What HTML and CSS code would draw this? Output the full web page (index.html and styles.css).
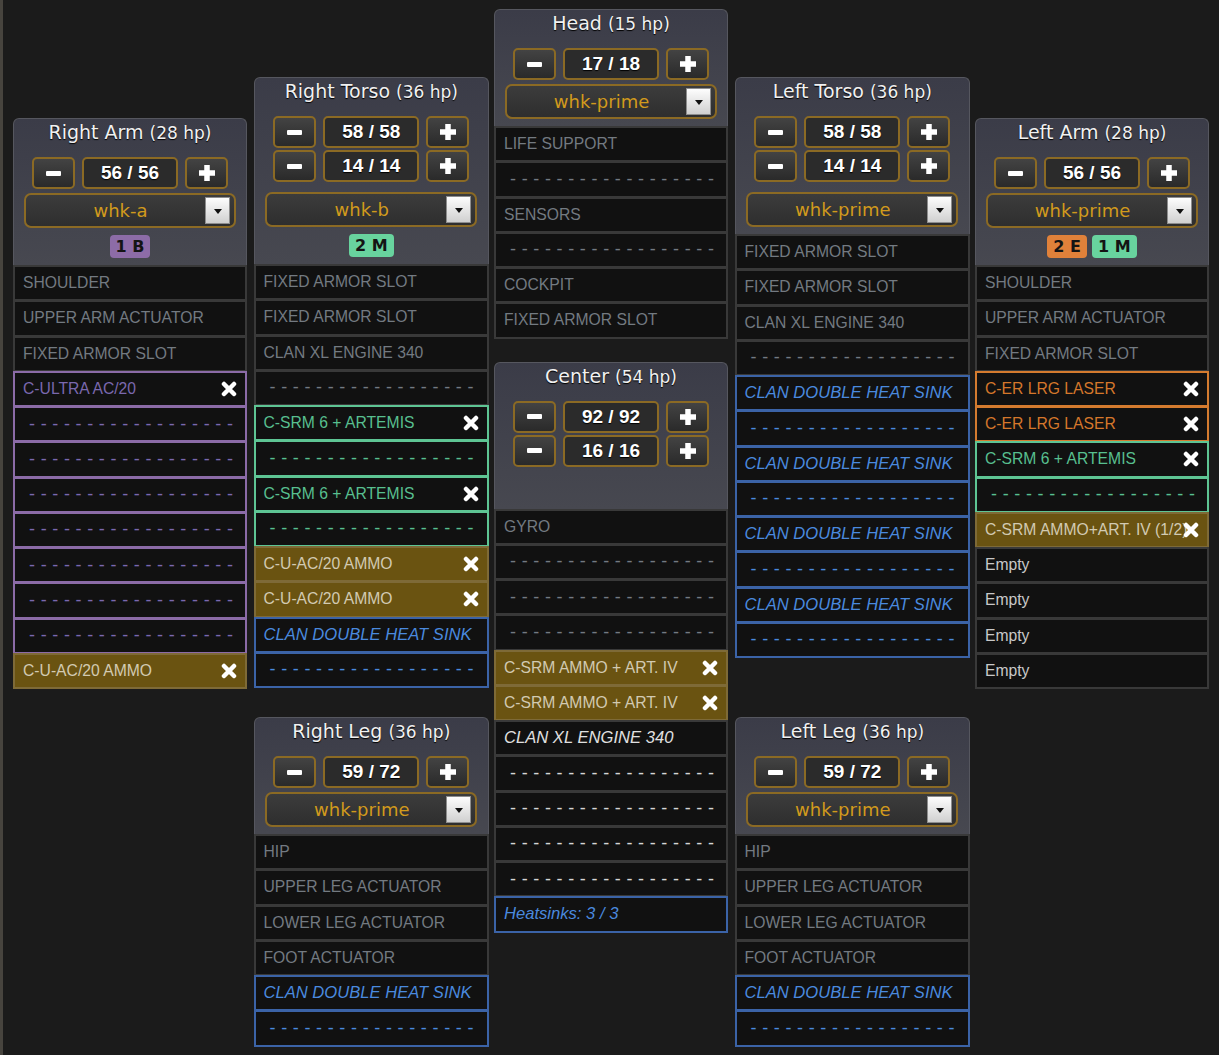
FILE: index.html
```html
<!DOCTYPE html>
<html><head>
  <meta charset="utf-8">
  <title>Mech loadout</title>
  <link rel="stylesheet" href="styles.css">
</head>
<body>

<div class="mech">

<div class="col arm">
<div class="part">
  <div class="part-head">
    <div class="title">Right Arm <small>(28 hp)</small></div>
    <div class="armor">
      <div class="row"><span class="btn"><svg width="15" height="5"><rect width="15" height="5" rx="1" fill="#fff"/></svg></span><span class="val">56 / 56</span><span class="btn"><svg width="16" height="16"><path d="M5.25 0h5.5v5.25H16v5.5h-5.25V16h-5.5v-5.25H0v-5.5h5.25z" fill="#fff"/></svg></span></div>
    </div>
    <div class="omni"><span>whk-a</span><i class="arrow"></i></div>
    <div class="hards"><span class="hp b">1 B</span></div>
  </div>
  <div class="slots">
    <div class="slot">Shoulder</div>
    <div class="slot">Upper Arm Actuator</div>
    <div class="slot">Fixed Armor Slot</div>
    <div class="slot b"><span class="name">C-Ultra AC/20</span><svg class="x" width="16" height="16"><path d="M3 3l10 10M13 3L3 13" stroke="#fff" stroke-width="4.5" stroke-linecap="round"/></svg></div>
    <div class="slot b dash">------------------</div>
    <div class="slot b dash">------------------</div>
    <div class="slot b dash">------------------</div>
    <div class="slot b dash">------------------</div>
    <div class="slot b dash">------------------</div>
    <div class="slot b dash">------------------</div>
    <div class="slot b dash">------------------</div>
    <div class="slot ammo"><span class="name">C-U-AC/20 Ammo</span><svg class="x" width="16" height="16"><path d="M3 3l10 10M13 3L3 13" stroke="#fff" stroke-width="4.5" stroke-linecap="round"/></svg></div>
  </div>
</div>
</div>

<div class="col side">
<div class="part">
  <div class="part-head double">
    <div class="title">Right Torso <small>(36 hp)</small></div>
    <div class="armor">
      <div class="row"><span class="btn"><svg width="15" height="5"><rect width="15" height="5" rx="1" fill="#fff"/></svg></span><span class="val">58 / 58</span><span class="btn"><svg width="16" height="16"><path d="M5.25 0h5.5v5.25H16v5.5h-5.25V16h-5.5v-5.25H0v-5.5h5.25z" fill="#fff"/></svg></span></div>
      <div class="row"><span class="btn"><svg width="15" height="5"><rect width="15" height="5" rx="1" fill="#fff"/></svg></span><span class="val">14 / 14</span><span class="btn"><svg width="16" height="16"><path d="M5.25 0h5.5v5.25H16v5.5h-5.25V16h-5.5v-5.25H0v-5.5h5.25z" fill="#fff"/></svg></span></div>
    </div>
    <div class="omni"><span>whk-b</span><i class="arrow"></i></div>
    <div class="hards"><span class="hp m">2 M</span></div>
  </div>
  <div class="slots">
    <div class="slot">Fixed Armor Slot</div>
    <div class="slot">Fixed Armor Slot</div>
    <div class="slot">Clan XL Engine 340</div>
    <div class="slot dash">------------------</div>
    <div class="slot m"><span class="name">C-SRM 6 + Artemis</span><svg class="x" width="16" height="16"><path d="M3 3l10 10M13 3L3 13" stroke="#fff" stroke-width="4.5" stroke-linecap="round"/></svg></div>
    <div class="slot m dash">------------------</div>
    <div class="slot m"><span class="name">C-SRM 6 + Artemis</span><svg class="x" width="16" height="16"><path d="M3 3l10 10M13 3L3 13" stroke="#fff" stroke-width="4.5" stroke-linecap="round"/></svg></div>
    <div class="slot m dash">------------------</div>
    <div class="slot ammo"><span class="name">C-U-AC/20 Ammo</span><svg class="x" width="16" height="16"><path d="M3 3l10 10M13 3L3 13" stroke="#fff" stroke-width="4.5" stroke-linecap="round"/></svg></div>
    <div class="slot ammo"><span class="name">C-U-AC/20 Ammo</span><svg class="x" width="16" height="16"><path d="M3 3l10 10M13 3L3 13" stroke="#fff" stroke-width="4.5" stroke-linecap="round"/></svg></div>
    <div class="slot hs">Clan Double Heat Sink</div>
    <div class="slot hs dash">------------------</div>
  </div>
</div>
<div class="part">
  <div class="part-head">
    <div class="title">Right Leg <small>(36 hp)</small></div>
    <div class="armor">
      <div class="row"><span class="btn"><svg width="15" height="5"><rect width="15" height="5" rx="1" fill="#fff"/></svg></span><span class="val">59 / 72</span><span class="btn"><svg width="16" height="16"><path d="M5.25 0h5.5v5.25H16v5.5h-5.25V16h-5.5v-5.25H0v-5.5h5.25z" fill="#fff"/></svg></span></div>
    </div>
    <div class="omni"><span>whk-prime</span><i class="arrow"></i></div>
  </div>
  <div class="slots">
    <div class="slot">Hip</div>
    <div class="slot">Upper Leg Actuator</div>
    <div class="slot">Lower Leg Actuator</div>
    <div class="slot">Foot Actuator</div>
    <div class="slot hs">Clan Double Heat Sink</div>
    <div class="slot hs dash">------------------</div>
  </div>
</div>
</div>

<div class="col mid">
<div class="part">
  <div class="part-head">
    <div class="title">Head <small>(15 hp)</small></div>
    <div class="armor">
      <div class="row"><span class="btn"><svg width="15" height="5"><rect width="15" height="5" rx="1" fill="#fff"/></svg></span><span class="val">17 / 18</span><span class="btn"><svg width="16" height="16"><path d="M5.25 0h5.5v5.25H16v5.5h-5.25V16h-5.5v-5.25H0v-5.5h5.25z" fill="#fff"/></svg></span></div>
    </div>
    <div class="omni"><span>whk-prime</span><i class="arrow"></i></div>
  </div>
  <div class="slots">
    <div class="slot">Life Support</div>
    <div class="slot dash">------------------</div>
    <div class="slot">Sensors</div>
    <div class="slot dash">------------------</div>
    <div class="slot">Cockpit</div>
    <div class="slot">Fixed Armor Slot</div>
  </div>
</div>
<div class="part">
  <div class="part-head">
    <div class="title">Center <small>(54 hp)</small></div>
    <div class="armor">
      <div class="row"><span class="btn"><svg width="15" height="5"><rect width="15" height="5" rx="1" fill="#fff"/></svg></span><span class="val">92 / 92</span><span class="btn"><svg width="16" height="16"><path d="M5.25 0h5.5v5.25H16v5.5h-5.25V16h-5.5v-5.25H0v-5.5h5.25z" fill="#fff"/></svg></span></div>
      <div class="row"><span class="btn"><svg width="15" height="5"><rect width="15" height="5" rx="1" fill="#fff"/></svg></span><span class="val">16 / 16</span><span class="btn"><svg width="16" height="16"><path d="M5.25 0h5.5v5.25H16v5.5h-5.25V16h-5.5v-5.25H0v-5.5h5.25z" fill="#fff"/></svg></span></div>
    </div>
    <div class="spacer"></div>
  </div>
  <div class="slots">
    <div class="slot">Gyro</div>
    <div class="slot dash">------------------</div>
    <div class="slot dash">------------------</div>
    <div class="slot dash">------------------</div>
    <div class="slot ammo"><span class="name">C-SRM Ammo + Art. IV</span><svg class="x" width="16" height="16"><path d="M3 3l10 10M13 3L3 13" stroke="#fff" stroke-width="4.5" stroke-linecap="round"/></svg></div>
    <div class="slot ammo"><span class="name">C-SRM Ammo + Art. IV</span><svg class="x" width="16" height="16"><path d="M3 3l10 10M13 3L3 13" stroke="#fff" stroke-width="4.5" stroke-linecap="round"/></svg></div>
    <div class="slot eng">Clan XL Engine 340</div>
    <div class="slot light dash">------------------</div>
    <div class="slot light dash">------------------</div>
    <div class="slot light dash">------------------</div>
    <div class="slot light dash">------------------</div>
    <div class="slot hs note">Heatsinks: 3 / 3</div>
  </div>
</div>
</div>

<div class="col side">
<div class="part">
  <div class="part-head double">
    <div class="title">Left Torso <small>(36 hp)</small></div>
    <div class="armor">
      <div class="row"><span class="btn"><svg width="15" height="5"><rect width="15" height="5" rx="1" fill="#fff"/></svg></span><span class="val">58 / 58</span><span class="btn"><svg width="16" height="16"><path d="M5.25 0h5.5v5.25H16v5.5h-5.25V16h-5.5v-5.25H0v-5.5h5.25z" fill="#fff"/></svg></span></div>
      <div class="row"><span class="btn"><svg width="15" height="5"><rect width="15" height="5" rx="1" fill="#fff"/></svg></span><span class="val">14 / 14</span><span class="btn"><svg width="16" height="16"><path d="M5.25 0h5.5v5.25H16v5.5h-5.25V16h-5.5v-5.25H0v-5.5h5.25z" fill="#fff"/></svg></span></div>
    </div>
    <div class="omni"><span>whk-prime</span><i class="arrow"></i></div>
  </div>
  <div class="slots">
    <div class="slot">Fixed Armor Slot</div>
    <div class="slot">Fixed Armor Slot</div>
    <div class="slot">Clan XL Engine 340</div>
    <div class="slot dash">------------------</div>
    <div class="slot hs">Clan Double Heat Sink</div>
    <div class="slot hs dash">------------------</div>
    <div class="slot hs">Clan Double Heat Sink</div>
    <div class="slot hs dash">------------------</div>
    <div class="slot hs">Clan Double Heat Sink</div>
    <div class="slot hs dash">------------------</div>
    <div class="slot hs">Clan Double Heat Sink</div>
    <div class="slot hs dash">------------------</div>
  </div>
</div>
<div class="part">
  <div class="part-head">
    <div class="title">Left Leg <small>(36 hp)</small></div>
    <div class="armor">
      <div class="row"><span class="btn"><svg width="15" height="5"><rect width="15" height="5" rx="1" fill="#fff"/></svg></span><span class="val">59 / 72</span><span class="btn"><svg width="16" height="16"><path d="M5.25 0h5.5v5.25H16v5.5h-5.25V16h-5.5v-5.25H0v-5.5h5.25z" fill="#fff"/></svg></span></div>
    </div>
    <div class="omni"><span>whk-prime</span><i class="arrow"></i></div>
  </div>
  <div class="slots">
    <div class="slot">Hip</div>
    <div class="slot">Upper Leg Actuator</div>
    <div class="slot">Lower Leg Actuator</div>
    <div class="slot">Foot Actuator</div>
    <div class="slot hs">Clan Double Heat Sink</div>
    <div class="slot hs dash">------------------</div>
  </div>
</div>
</div>

<div class="col arm">
<div class="part">
  <div class="part-head">
    <div class="title">Left Arm <small>(28 hp)</small></div>
    <div class="armor">
      <div class="row"><span class="btn"><svg width="15" height="5"><rect width="15" height="5" rx="1" fill="#fff"/></svg></span><span class="val">56 / 56</span><span class="btn"><svg width="16" height="16"><path d="M5.25 0h5.5v5.25H16v5.5h-5.25V16h-5.5v-5.25H0v-5.5h5.25z" fill="#fff"/></svg></span></div>
    </div>
    <div class="omni"><span>whk-prime</span><i class="arrow"></i></div>
    <div class="hards"><span class="hp e">2 E</span><span class="hp m">1 M</span></div>
  </div>
  <div class="slots">
    <div class="slot">Shoulder</div>
    <div class="slot">Upper Arm Actuator</div>
    <div class="slot">Fixed Armor Slot</div>
    <div class="slot e"><span class="name">C-ER LRG Laser</span><svg class="x" width="16" height="16"><path d="M3 3l10 10M13 3L3 13" stroke="#fff" stroke-width="4.5" stroke-linecap="round"/></svg></div>
    <div class="slot e"><span class="name">C-ER LRG Laser</span><svg class="x" width="16" height="16"><path d="M3 3l10 10M13 3L3 13" stroke="#fff" stroke-width="4.5" stroke-linecap="round"/></svg></div>
    <div class="slot m"><span class="name">C-SRM 6 + Artemis</span><svg class="x" width="16" height="16"><path d="M3 3l10 10M13 3L3 13" stroke="#fff" stroke-width="4.5" stroke-linecap="round"/></svg></div>
    <div class="slot m dash">------------------</div>
    <div class="slot ammo"><span class="name">C-SRM Ammo+Art. IV (1/2)</span><svg class="x" width="16" height="16"><path d="M3 3l10 10M13 3L3 13" stroke="#fff" stroke-width="4.5" stroke-linecap="round"/></svg></div>
    <div class="slot empty">Empty</div>
    <div class="slot empty">Empty</div>
    <div class="slot empty">Empty</div>
    <div class="slot empty">Empty</div>
  </div>
</div>
</div>

</div>

</body>
</html>
```

FILE: styles.css
```css
html, body {
  margin: 0; padding: 0; background: #1b1b1b;
}
body {
  height: 1055px; overflow: hidden; box-sizing: border-box;
  border-left: 3px solid #47443e;
  font-family: "Liberation Sans", Arial, sans-serif;
}

.mech {
  display: flex;
  align-items: flex-start;
  gap: 6.5px;
  padding-left: 10px;
}
.col { width: 234px; flex: none; }
.col.arm { padding-top: 118px; }
.col.side {
  padding-top: 77px;
  display: grid;
  grid-template-rows: 640px auto;
}
.col.mid { padding-top: 9px; }
.col.mid .part + .part { margin-top: 23px; }

/* part header */
.part-head {
  border: 1px solid #56575f;
  border-bottom: 0;
  border-radius: 6px 6px 0 0;
  background: linear-gradient(#3b3c48, #474850);
  padding: 3px 0 7px;
  text-align: center;
}
.title {
  font: 19px/20px "DejaVu Sans", sans-serif;
  color: #f1f1f1;
  text-shadow: 0 1px 1px #000;
}
.title small { font-size: 17px; }

.armor {
  margin-top: 14px;
  display: flex;
  flex-direction: column;
  align-items: center;
  gap: 2px;
}
.armor .row { display: flex; gap: 7px; }
.btn, .val {
  box-sizing: border-box;
  height: 32px;
  border: 2px solid #8b6a24;
  border-radius: 5px;
}
.btn {
  width: 43px;
  background: linear-gradient(#434343, #2a2a2a);
  display: flex; align-items: center; justify-content: center;
}
.val {
  width: 96px;
  background: #2b2b2b;
  color: #fff;
  font: bold 19px/28px "Liberation Sans", Arial, sans-serif;
  text-shadow: 0 1px 1px #000;
}

.omni {
  box-sizing: border-box;
  width: 212px; height: 35px;
  margin: 4px auto 0;
  border: 2px solid #8b6a24;
  border-radius: 7px;
  background: linear-gradient(#3c3c3c, #2e2e2e);
  display: flex; align-items: center;
  padding: 0 4px 0 10px;
}
.double .omni { margin-top: 10px; }
.omni span {
  flex: 1;
  color: #d19a1c;
  font: 18px "DejaVu Sans", sans-serif;
}
.arrow {
  box-sizing: border-box;
  width: 25px; height: 27px;
  border: 1px solid #8d8d8d;
  background: linear-gradient(#fdfdfd, #d0d0d0);
  display: flex; align-items: center; justify-content: center;
}
.arrow::after {
  content: "";
  border: 4px solid transparent;
  border-top: 5px solid #111;
  border-bottom: 0;
  margin-top: 2px;
}
.spacer { height: 35px; }

.hards {
  margin-top: 7px;
  display: flex; justify-content: center; gap: 5px;
}
.hp {
  height: 23px;
  padding: 0 6px;
  border-radius: 4px;
  font: bold 16px/23px "DejaVu Sans", sans-serif;
  color: #141414;
}
.hp.b { background: #8d6ca7; }
.hp.m { background: #68d39e; }
.hp.e { background: #e0813a; }

/* crit slots */
.slot {
  box-sizing: border-box;
  height: 36.25px;
  margin-top: -1px;
  border: 2px solid #393939;
  background: #111;
  display: flex; align-items: center;
  padding: 0 8px;
  font-size: 15.7px;
  color: #737a81;
  text-transform: uppercase;
  white-space: nowrap;
  overflow: hidden;
}
.slot:first-child { margin-top: 0; }
.slot .name { flex: 1; min-width: 0; }
.slot .x { flex: none; }

.slot.b { border-color: #8b6ba7; color: #7a68ae; }
.slot.m { border-color: #5ec594; color: #58bf8f; }
.slot.e { border-color: #d47b2f; color: #d5772b; }
.slot.ammo { background: #6a5311; border-color: #7e6a37; color: #d2cab2; }
.slot.hs { border-color: #3b63a7; color: #4a89de; font-style: italic; font-size: 16.6px; }
.slot.eng { color: #e0e0e0; font-style: italic; font-size: 16.6px; }
.slot.light { color: #d5d5d5; }
.slot.empty { text-transform: none; color: #c8c8c8; }
.slot.note { text-transform: none; }

.slot.dash {
  font-size: 18px;
  font-style: normal;
  letter-spacing: 5.65px;
  padding-left: 14px;
}
```
